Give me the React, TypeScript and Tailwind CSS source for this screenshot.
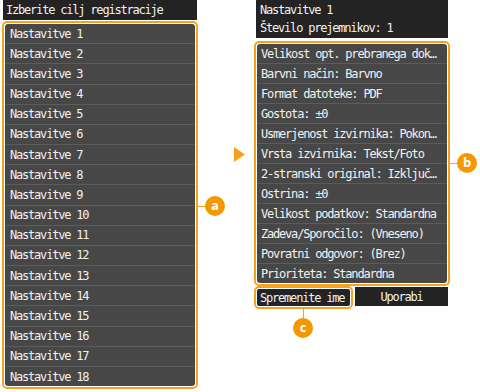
import React from "react";

const mono = { fontFamily: '"DejaVu Sans Mono", "Liberation Mono", monospace' };

const leftRows = Array.from({ length: 18 }, (_, i) => `Nastavitve ${i + 1}`);
const rightRows = [
  "Velikost opt. prebranega dok…",
  "Barvni način: Barvno",
  "Format datoteke: PDF",
  "Gostota: ±0",
  "Usmerjenost izvirnika: Pokon…",
  "Vrsta izvirnika: Tekst/Foto",
  "2-stranski original: Izključ…",
  "Ostrina: ±0",
  "Velikost podatkov: Standardna",
  "Zadeva/Sporočilo: (Vneseno)",
  "Povratni odgovor: (Brez)",
  "Prioriteta: Standardna",
];

function Callout({ letter, className }: { letter: string; className: string }) {
  return (
    <div
      className={`absolute w-[20px] h-[20px] rounded-full bg-[#f39800] text-white flex items-center justify-center text-[13px] font-bold leading-none tracking-normal ${className}`}
      style={{ fontFamily: '"Open Sans", "DejaVu Sans", sans-serif' }}
    >
      <span className="-mt-[2px]">{letter}</span>
    </div>
  );
}

export default function App() {
  return (
    <div
      className="relative w-[480px] h-[392px] bg-white overflow-hidden flex text-[12px] tracking-[-1.2px] text-[#f2f2f2]"
      style={mono}
    >
      {/* Left column */}
      <div className="ml-[2px] w-[196px] flex flex-col">
        <div className="mx-[1px] h-[20px] bg-[#232323] pl-[3px] flex items-center">
          Izberite cilj registracije
        </div>
        <div className="mt-[1px] h-[368px] rounded-[5px] border-2 border-[#f5a31e] bg-white p-[1px]">
          <div className="h-full rounded-[3px] bg-[#474747] flex flex-col overflow-hidden">
            {leftRows.map((r, i) => (
              <div
                key={r}
                className={`flex-1 flex items-center pl-[5px] ${i > 0 ? "border-t border-[#5c5c5c]" : ""}`}
              >
                {r}
              </div>
            ))}
          </div>
        </div>
      </div>

      {/* Gap with arrow */}
      <div className="w-[56px] relative">
        <svg className="absolute left-[36px] top-[147px]" width="12" height="15" viewBox="0 0 12 15">
          <polygon points="0,0 11,7.5 0,15" fill="#f5a01a" />
        </svg>
      </div>

      {/* Right column */}
      <div className="w-[196px] flex flex-col">
        <div className="mx-[2px] h-[38px] bg-[#232323] pl-[4px] flex flex-col justify-center gap-[3px] leading-[15px]">
          <div>Nastavitve 1</div>
          <div>Število prejemnikov: 1</div>
        </div>
        <div className="mt-[3px] h-[245px] rounded-[5px] border-2 border-[#f5a31e] bg-white p-[1px]">
          <div className="h-full rounded-[3px] bg-[#474747] flex flex-col overflow-hidden">
            {rightRows.map((r, i) => (
              <div
                key={r}
                className={`flex-1 flex items-center pl-[4px] whitespace-nowrap overflow-hidden ${i > 0 ? "border-t border-[#5c5c5c]" : ""}`}
              >
                {r}
              </div>
            ))}
          </div>
        </div>
        <div className="flex items-start">
          <div className="w-[99px] h-[23px] rounded-[5px] border-2 border-[#f5a31e] bg-white p-[1px]">
            <div className="h-full rounded-[2px] bg-[#232323] flex items-center pl-[3px] whitespace-nowrap">
              Spremenite ime
            </div>
          </div>
          <div className="ml-[2px] mt-[1px] w-[93px] h-[19px] bg-[#232323] flex items-center justify-center">
            Uporabi
          </div>
        </div>
      </div>

      {/* Callouts */}
      <div className="absolute left-[198px] top-[206px] w-[8px] h-px bg-[#f5a31e]" />
      <Callout letter="a" className="left-[205px] top-[196px]" />
      <div className="absolute left-[450px] top-[163px] w-[8px] h-px bg-[#f5a31e]" />
      <Callout letter="b" className="left-[457px] top-[153px]" />
      <div className="absolute left-[303px] top-[309px] w-px h-[10px] bg-[#f5a31e]" />
      <Callout letter="c" className="left-[293px] top-[318px]" />
    </div>
  );
}
